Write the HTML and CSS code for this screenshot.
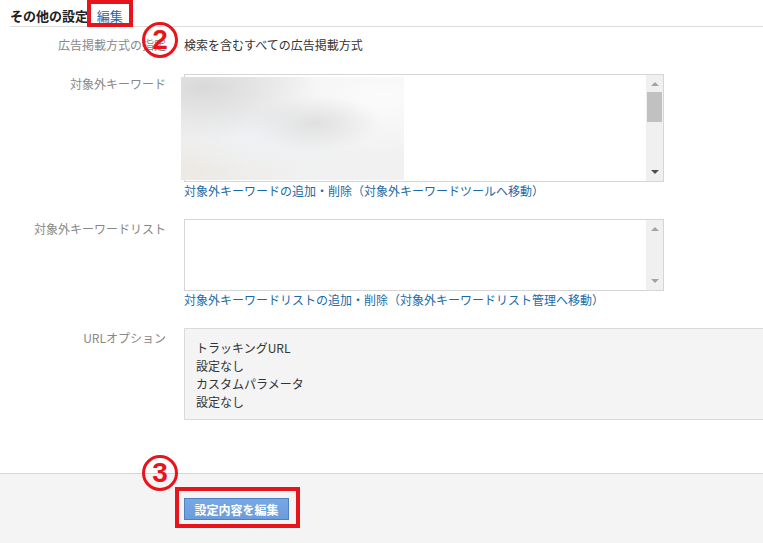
FILE: index.html
```html
<!DOCTYPE html>
<html lang="ja">
<head>
  <meta charset="UTF-8" />
  <title>その他の設定</title>
  <link rel="stylesheet" href="styles.css">
</head>
<body>

<div class="section">
  <div class="section-head">
    <span class="title">その他の設定</span>
    <a class="edit-link" href="#">編集</a>
  </div>

  <div class="rows">
    <div class="label">広告掲載方式の指定</div>
    <div class="value">検索を含むすべての広告掲載方式</div>

    <div class="label">対象外キーワード</div>
    <div class="value">
      <div class="textbox tall">
        <div class="textbox-body">
          <div class="blurred"></div>
        </div>
        <div class="scrollbar">
          <span class="arrow up"></span>
          <span class="thumb"></span>
          <span class="arrow down dark"></span>
        </div>
      </div>
      <a class="sub-link" href="#">対象外キーワードの追加・削除（対象外キーワードツールへ移動）</a>
    </div>

    <div class="label">対象外キーワードリスト</div>
    <div class="value">
      <div class="textbox short">
        <div class="textbox-body"></div>
        <div class="scrollbar">
          <span class="arrow up"></span>
          <span class="arrow down"></span>
        </div>
      </div>
      <a class="sub-link" href="#">対象外キーワードリストの追加・削除（対象外キーワードリスト管理へ移動）</a>
    </div>

    <div class="label">URLオプション</div>
    <div class="value">
      <div class="info-box">
        <div>トラッキングURL</div>
        <div>設定なし</div>
        <div>カスタムパラメータ</div>
        <div>設定なし</div>
      </div>
    </div>
  </div>
</div>

<div class="footer">
  <button class="btn-edit">設定内容を編集</button>
</div>

<!-- annotations -->
<div class="mark-box mark-edit"></div>
<div class="mark-num mark-2">2</div>
<div class="mark-num mark-3">3</div>
<div class="mark-box mark-btn"></div>

</body>
</html>
```

FILE: styles.css
```css
html, body {
  margin: 0;
  background-color: #fff;
  color: #333;
  font-family: "Noto Sans CJK JP", "Noto Sans", sans-serif;
  font-size: 12px;
}

body {
  position: relative;
  width: 763px;
  height: 543px;
  overflow: hidden;
}

a {
  color: #1b6aa8;
  text-decoration: none;
}

.section-head {
  margin-left: 10px;
  padding-top: 7px;
  padding-bottom: 1px;
  line-height: 18px;
  border-bottom: 1px solid #dcdcdc;
}

.section-head .title {
  font-weight: bold;
  font-size: 13px;
  color: #222;
}

.edit-link {
  margin-left: 6px;
  font-size: 13px;
}

.rows {
  display: grid;
  grid-template-columns: 166px 1fr;
  column-gap: 18px;
  row-gap: 19px;
  margin-top: 8px;
}

.label {
  text-align: right;
  color: #888;
  line-height: 20px;
}

.value {
  line-height: 20px;
}

.textbox {
  position: relative;
  display: flex;
  width: 480px;
  box-sizing: border-box;
  border: 1px solid #d6d6d6;
  background: #fff;
}

.textbox.tall { height: 108px; }
.textbox.short { height: 72px; }

.textbox-body {
  flex: 1;
}

.scrollbar {
  position: relative;
  width: 17px;
  background: #f0f0f0;
}

.arrow {
  position: absolute;
  left: 5px;
  width: 0;
  height: 0;
  border-left: 4px solid transparent;
  border-right: 4px solid transparent;
}

.arrow.up {
  top: 7px;
  border-bottom: 4px solid #a3a3a3;
}

.arrow.down {
  bottom: 7px;
  border-top: 4px solid #a3a3a3;
}

.arrow.dark {
  border-top-color: #505050;
}

.thumb {
  position: absolute;
  left: 1px;
  right: 1px;
  top: 17px;
  height: 30px;
  background: #c1c1c1;
}

.blurred {
  position: absolute;
  left: -4px;
  top: 2px;
  width: 223px;
  height: 103px;
  background:
    radial-gradient(ellipse at 10% 10%, #d9d9d9 0%, rgba(230,230,230,0) 40%),
    radial-gradient(ellipse at 60% 45%, #e0e0e0 0%, rgba(230,230,230,0) 35%),
    radial-gradient(ellipse at 35% 60%, #eef1f4 0%, rgba(240,240,240,0) 45%),
    radial-gradient(ellipse at 5% 90%, #ece9e4 0%, rgba(240,240,240,0) 40%),
    radial-gradient(ellipse at 90% 20%, #fbfbfb 0%, rgba(250,250,250,0) 50%),
    #f1f1f1;
}

.sub-link {
  display: block;
  line-height: 18px;
}

.info-box {
  box-sizing: border-box;
  width: 600px;
  height: 92px;
  padding: 10px 11px 0;
  background: #f4f4f4;
  border: 1px solid #dadada;
  line-height: 18px;
  color: #333;
}

.footer {
  margin-top: 53px;
  height: 45px;
  padding: 24px 0 0 184px;
  background: #f4f4f4;
  border-top: 1px solid #d6d6d6;
}

.btn-edit {
  display: block;
  width: 105px;
  height: 22px;
  padding: 0;
  border: 1px solid #4d7fc4;
  background: linear-gradient(#78a8e4, #6b9cdb);
  color: #fff;
  font-family: "Noto Sans CJK JP", sans-serif;
  font-size: 12px;
  font-weight: bold;
}

.mark-box {
  position: absolute;
  box-sizing: border-box;
  border: 4px solid #e8141c;
}

.mark-edit {
  left: 87px;
  top: 0;
  width: 46px;
  height: 27px;
}

.mark-btn {
  left: 175px;
  top: 487px;
  width: 125px;
  height: 41px;
}

.mark-num {
  position: absolute;
  box-sizing: border-box;
  width: 36px;
  height: 36px;
  border: 3px solid #e8141c;
  border-radius: 50%;
  color: #e8141c;
  font-family: "Liberation Sans", Arial, sans-serif;
  font-weight: bold;
  font-size: 28px;
  line-height: 30px;
  text-align: center;
}

.mark-2 {
  left: 142px;
  top: 22px;
}

.mark-3 {
  left: 142px;
  top: 455px;
}
```
